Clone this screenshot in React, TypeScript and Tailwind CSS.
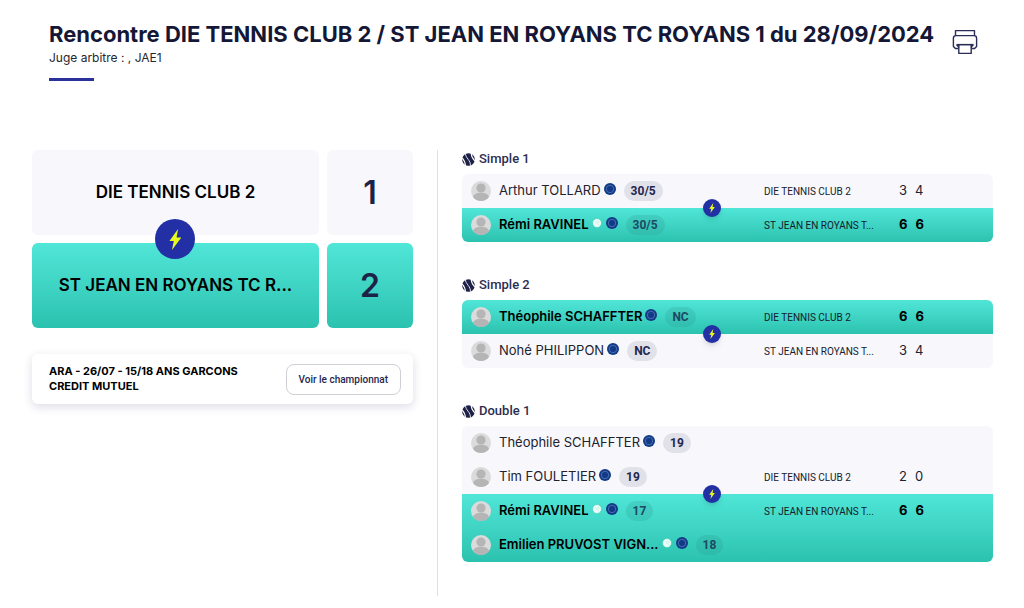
import React from 'react';

interface Player {
    name: string;
    ranking: string;
    hasBall?: boolean;
}

interface Side {
    club: string;
    players: Player[];
    games: number[];
    winner: boolean;
}

interface Match {
    title: string;
    sides: [Side, Side];
}

const HOME = 'DIE TENNIS CLUB 2';
const AWAY = 'ST JEAN EN ROYANS T...';

const MATCHES: Match[] = [
    {
        title: 'Simple 1',
        sides: [
            { club: HOME, players: [{ name: 'Arthur TOLLARD', ranking: '30/5' }], games: [3, 4], winner: false },
            { club: AWAY, players: [{ name: 'Rémi RAVINEL', ranking: '30/5', hasBall: true }], games: [6, 6], winner: true },
        ],
    },
    {
        title: 'Simple 2',
        sides: [
            { club: HOME, players: [{ name: 'Théophile SCHAFFTER', ranking: 'NC' }], games: [6, 6], winner: true },
            { club: AWAY, players: [{ name: 'Nohé PHILIPPON', ranking: 'NC' }], games: [3, 4], winner: false },
        ],
    },
    {
        title: 'Double 1',
        sides: [
            {
                club: HOME,
                players: [{ name: 'Théophile SCHAFFTER', ranking: '19' }, { name: 'Tim FOULETIER', ranking: '19' }],
                games: [2, 0],
                winner: false,
            },
            {
                club: AWAY,
                players: [
                    { name: 'Rémi RAVINEL', ranking: '17', hasBall: true },
                    { name: 'Emilien PRUVOST VIGN...', ranking: '18', hasBall: true },
                ],
                games: [6, 6],
                winner: true,
            },
        ],
    },
];

const WIN_BG = 'bg-linear-to-b from-[#50e6d8] to-[#2bc2af]';

const BoltIcon = ({ className }: { className: string }) => (
    <svg viewBox="0 0 12 20" className={className} fill="#e9fb1c" aria-hidden="true">
        <path d="M8.6 0 0.4 11.4h4.2L2.8 20 11.8 8.2H7.2z" />
    </svg>
);

const PrinterIcon = () => (
    <svg viewBox="0 0 26 26" className="w-[26px] h-[26px]" fill="none" stroke="#2a2e57" strokeWidth="1.4" strokeLinejoin="round" aria-hidden="true">
        <path d="M3.5 6.5V1.6h19v4.9" />
        <path d="M6 19.5H3.4L1.4 17.5V9.2c0-1.6 1-2.6 2.6-2.6h18c1.6 0 2.6 1 2.6 2.6v8.3l-2 2H20" />
        <path d="M4.5 15.6h17" />
        <path d="M6.8 15.6h12.4v8.8H6.8z" />
        <path d="M4.4 16h2.4v3zM21.6 16h-2.4v3z" fill="#2a2e57" strokeWidth="0.5" />
    </svg>
);

const BallIcon = () => (
    <svg viewBox="0 0 14 14" className="w-[13px] h-[13px]" aria-hidden="true">
        <circle cx="7" cy="7" r="6.8" fill="#1d2148" />
        <path d="M3.6 0.4c0.2 2.4 1.4 4.4 3 6.4s2.6 4.2 2.6 7" fill="none" stroke="#fff" strokeWidth="0.9" />
        <path d="M0 5.4c2 1.8 3.4 4.6 3.8 8.4M9.8 0.2c0.4 3.6 1.8 6.4 4.2 8.4" fill="none" stroke="#fff" strokeWidth="1.2" />
    </svg>
);

const Avatar = () => (
    <svg viewBox="0 0 20 20" className="w-5 h-5 shrink-0" aria-hidden="true">
        <circle cx="10" cy="10" r="10" fill="#dbdbdb" />
        <circle cx="10" cy="7" r="4.6" fill="#b5b5b5" />
        <path d="M2 16c1-3.2 4-4.2 8-4.2s7 1 8 4.2c-1.8 2.4-4.6 4-8 4s-6.2-1.6-8-4z" fill="#b5b5b5" />
    </svg>
);

const LicenceDot = () => (
    <svg viewBox="0 0 12 12" className="w-3 h-3" aria-hidden="true">
        <circle cx="6" cy="6" r="6" fill="#123a86" />
        <circle cx="6" cy="6" r="3.7" fill="none" stroke="#5b82bd" strokeWidth="0.7" />
    </svg>
);

const BallDot = () => (
    <svg viewBox="0 0 10 10" className="w-[10px] h-[10px]" aria-hidden="true">
        <circle cx="5" cy="5" r="4.5" fill="#eafcf8" stroke="#38c9b2" strokeWidth="0.6" />
        <path d="M3.5 3l3 4M5.5 2.5l2 2.5" stroke="#a8eadd" strokeWidth="0.6" />
    </svg>
);

const PlayerLine: React.FC<{ player: Player; winner: boolean }> = ({ player, winner }) => (
    <div className="flex items-center h-[34px] pl-[9px]">
        <Avatar />
        <span className={`ml-2 text-[13px] whitespace-nowrap ${winner ? 'font-semibold text-black' : 'text-[#22222c]'}`}>{player.name}</span>
        <span className="flex items-center gap-1 ml-[3px] pb-1">
            {player.hasBall && <BallDot />}
            <LicenceDot />
        </span>
        <span className={`ml-2 rounded-full px-[7px] text-xs leading-5 font-bold [font-family:Roboto,sans-serif] ${winner ? 'bg-[#2b9c94]/25 text-[#1d4a63]' : 'bg-[#e1e1ea] text-[#23264f]'}`}>
            {player.ranking}
        </span>
    </div>
);

const SideBlock: React.FC<{ side: Side; first: boolean }> = ({ side, first }) => (
    <div
        className={`grid grid-cols-[302fr_135fr_94fr] ${first ? 'items-end rounded-t-md' : 'items-start rounded-b-md'} ${
            side.winner ? WIN_BG : 'bg-[#f7f7fc]'
        }`}
    >
        <div className="min-w-0">
            {side.players.map((player) => (
                <PlayerLine key={player.name} player={player} winner={side.winner} />
            ))}
        </div>
        <span className="pt-0.5 text-[10px] leading-8 whitespace-nowrap text-[#15202c] [font-family:Roboto,sans-serif]">{side.club}</span>
        <span className={`flex gap-2 pb-0.5 text-[13px] leading-8 ${side.winner ? 'font-bold text-black' : 'text-[#22222c]'}`}>
            {side.games.map((game, idx) => (
                <span key={idx}>{game}</span>
            ))}
        </span>
    </div>
);

const MatchCard: React.FC<{ match: Match }> = ({ match }) => (
    <section>
        <h2 className="flex items-center gap-1 mb-1.5 text-[13px] leading-[18px] font-medium [font-family:Roboto,sans-serif] text-[#2b2e50]">
            <BallIcon />
            {match.title}
        </h2>
        <SideBlock side={match.sides[0]} first />
        <div className="relative">
            <span className="absolute z-10 left-[47%] top-0 -translate-x-1/2 -translate-y-1/2 w-[18px] h-[18px] rounded-full bg-[#2330a5] shadow-md flex items-center justify-center">
                <BoltIcon className="h-[10px]" />
            </span>
            <SideBlock side={match.sides[1]} first={false} />
        </div>
    </section>
);

const TeamRow: React.FC<{ name: string; points: number; winner: boolean }> = ({ name, points, winner }) => {
    const bg = winner ? WIN_BG : 'bg-[#f7f7fc]';
    return (
        <div className="grid grid-cols-[287fr_86fr] gap-2 h-[85px]">
            <div className={`flex items-center justify-center rounded-md text-[17px] font-semibold text-black whitespace-nowrap ${bg}`}>{name}</div>
            <div className={`flex items-center justify-center rounded-md text-[32px] font-semibold text-[#1d2348] ${bg}`}>{points}</div>
        </div>
    );
};

const App: React.FC = () => {
    return (
        <div className="min-h-screen bg-white font-[Inter,'Liberation_Sans',sans-serif]">
            <header className="flex items-start justify-between pl-[49px] pr-[46px] pt-5">
                <div>
                    <h1 className="text-[22px] leading-7 font-bold text-[#141735] whitespace-nowrap">
                        Rencontre DIE TENNIS CLUB 2 / ST JEAN EN ROYANS TC ROYANS 1 du 28/09/2024
                    </h1>
                    <p className="text-xs leading-5 text-[#26262e]">Juge arbitre : , JAE1</p>
                    <div className="mt-[10px] w-[45px] h-[3px] bg-[#2b319b]" />
                </div>
                <button type="button" aria-label="Imprimer" className="mt-[9px]">
                    <PrinterIcon />
                </button>
            </header>

            <main className="grid grid-cols-[406fr_555fr] pl-8 pr-[31px] pt-[69px] pb-3">
                <div className="border-r border-[#dfdfe4] pr-6">
                    <div className="relative flex flex-col gap-2">
                        <TeamRow name="DIE TENNIS CLUB 2" points={1} winner={false} />
                        <TeamRow name="ST JEAN EN ROYANS TC R..." points={2} winner />
                        <span className="absolute left-[143px] top-1/2 -translate-x-1/2 -translate-y-1/2 w-10 h-10 rounded-full bg-[#2330a5] flex items-center justify-center">
                            <BoltIcon className="h-[21px]" />
                        </span>
                    </div>

                    <div className="flex items-center justify-between mt-[26px] h-[50px] pl-[17px] pr-3 rounded-md bg-white shadow-[0_3px_10px_rgba(40,40,100,0.16)]">
                        <p className="text-[11px] leading-[15px] font-bold text-black">
                            ARA - 26/07 - 15/18 ANS GARCONS
                            <br />
                            CREDIT MUTUEL
                        </p>
                        <button
                            type="button"
                            className="h-[31px] px-3 rounded-lg border border-[#cfcfd6] bg-white text-[10px] font-medium [font-family:Roboto,sans-serif] text-[#23264f] whitespace-nowrap"
                        >
                            Voir le championnat
                        </button>
                    </div>
                </div>

                <div className="flex flex-col gap-[34px] pl-6 pb-[34px]">
                    {MATCHES.map((match) => (
                        <MatchCard key={match.title} match={match} />
                    ))}
                </div>
            </main>
        </div>
    );
};

export default App;
